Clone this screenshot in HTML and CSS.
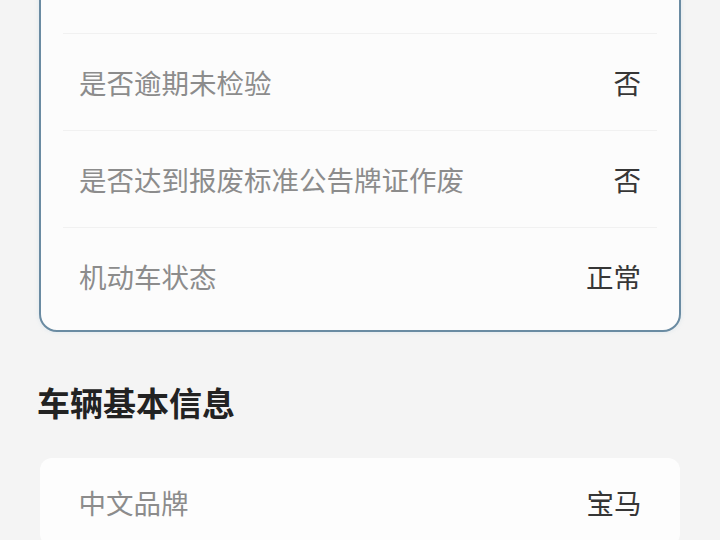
FILE: index.html
```html
<!DOCTYPE html>
<html lang="zh-CN">
<head>
<meta charset="utf-8">
<title>车辆信息</title>
<link rel="stylesheet" href="styles.css">
</head>
<body>
<main class="page">
  <section class="card card-outlined">
    <div class="row">
      <span class="label">是否逾期未检验</span>
      <span class="value">否</span>
    </div>
    <div class="row">
      <span class="label">是否达到报废标准公告牌证作废</span>
      <span class="value">否</span>
    </div>
    <div class="row">
      <span class="label">机动车状态</span>
      <span class="value">正常</span>
    </div>
  </section>

  <h2 class="section-title">车辆基本信息</h2>

  <section class="card card-plain">
    <div class="row">
      <span class="label">中文品牌</span>
      <span class="value">宝马</span>
    </div>
  </section>
</main>
</body>
</html>
```
FILE: styles.css
```css
html, body {
  margin: 0;
  padding: 0;
}

body {
  background: #f4f4f4;
  font-family: "Noto Sans CJK SC", "Noto Sans", sans-serif;
  overflow: hidden;
}

.page {
  padding: 0 39px;
}

.card {
  box-sizing: border-box;
  background: #fcfcfc;
}

/* status card, scrolled so its top edge sits above the viewport */
.card-outlined {
  margin-top: -24px;
  border: 2px solid #6a8ba2;
  border-radius: 18px;
  padding: 55px 22px 6px;
  box-shadow: 0 0 4px rgba(150, 190, 215, 0.25);
}

.card-plain {
  margin: 33px 1px 0;
  border-radius: 12px;
  background: #fdfdfd;
  padding: 0 22.5px;
}

.row {
  box-sizing: border-box;
  height: 97px;
  padding: 0 16px;
  display: flex;
  align-items: center;
  justify-content: space-between;
  border-top: 1px solid #f1f1f1;
  font-size: 27.5px;
  line-height: 40px;
}

.card-plain .row:first-child {
  border-top: none;
  height: 88px;
}

.label {
  color: #8c8c8c;
}

.value {
  color: #363636;
}

.section-title {
  margin: 47px 0 0 -2px;
  font-size: 33px;
  line-height: 46px;
  font-weight: 700;
  color: #222222;
}
```
